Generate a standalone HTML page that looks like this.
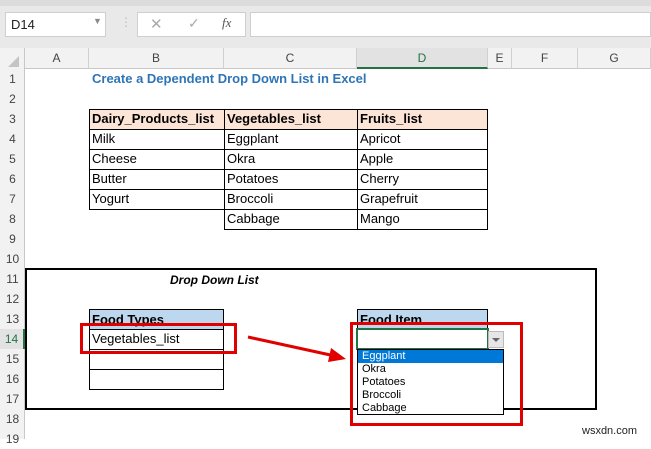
<!DOCTYPE html>
<html><head><style>
*{margin:0;padding:0;box-sizing:border-box}
body{width:651px;height:439px;overflow:hidden;background:#fff;position:relative;font-family:"Liberation Sans",sans-serif;}
.a{position:absolute}
.t{position:absolute;font-size:13px;color:#000;white-space:nowrap}
.hl{position:absolute;background:#d4d4d4}
.rn{position:absolute;left:0;width:25px;text-align:center;font-size:12px;color:#444;height:20px;line-height:20px}
.ch{position:absolute;top:48px;height:21px;line-height:21px;text-align:center;font-size:12px;color:#444;border-right:1px solid #d0d0d0}
.cell{position:absolute;border:1px solid #000;font-size:13px;padding-left:3px;line-height:18px;height:21px}
</style></head><body>
<div class="a" style="left:0;top:0;width:651px;height:48px;background:#e9e9e9"></div>
<div class="a" style="left:0;top:0;width:651px;height:6px;background:#dcdcdc"></div>
<div class="a" style="left:5px;top:12px;width:101px;height:25px;background:#fff;border:1px solid #cfcfcf"></div>
<div class="t" style="left:11px;top:17px;font-size:13px;color:#222">D14</div>
<div class="t" style="left:93px;top:16px;font-size:9px;color:#888">▼</div>
<div class="t" style="left:120px;top:15px;font-size:12px;color:#bbb">⋮</div>
<div class="a" style="left:137px;top:12px;width:109px;height:25px;background:#fff;border:1px solid #cfcfcf"></div>
<div class="t" style="left:150px;top:15px;font-size:15px;color:#aaa">✕</div>
<div class="t" style="left:188px;top:15px;font-size:14px;color:#aaa">✓</div>
<div class="t" style="left:222px;top:15px;font-size:13px;color:#555;font-family:'Liberation Serif',serif;font-style:italic">fx</div>
<div class="a" style="left:250px;top:12px;width:401px;height:25px;background:#fff;border:1px solid #cfcfcf"></div>
<!-- header row -->
<div class="a" style="left:0;top:48px;width:651px;height:21px;background:#f2f2f2;border-bottom:1px solid #c8c8c8"></div>
<div class="a" style="left:0;top:48px;width:25px;height:391px;background:#f2f2f2;border-right:1px solid #c8c8c8"></div>
<div class="a" style="left:8px;top:56px;width:0;height:0;border-left:11px solid transparent;border-bottom:11px solid #c4c4c4"></div>
<div class="ch" style="left:25px;width:64px">A</div>
<div class="ch" style="left:89px;width:135px">B</div>
<div class="ch" style="left:224px;width:133px">C</div>
<div class="ch" style="left:357px;width:131px;background:#e2e2e2;color:#217346;border-bottom:2px solid #217346">D</div>
<div class="ch" style="left:488px;width:24px">E</div>
<div class="ch" style="left:512px;width:66px">F</div>
<div class="ch" style="left:578px;width:73px">G</div>
<div class="rn" style="top:69px">1</div><div class="rn" style="top:89px">2</div><div class="rn" style="top:109px">3</div><div class="rn" style="top:129px">4</div><div class="rn" style="top:149px">5</div><div class="rn" style="top:169px">6</div><div class="rn" style="top:189px">7</div><div class="rn" style="top:209px">8</div><div class="rn" style="top:229px">9</div><div class="rn" style="top:249px">10</div><div class="rn" style="top:269px">11</div><div class="rn" style="top:289px">12</div><div class="rn" style="top:309px">13</div><div class="rn" style="top:329px;background:#e2e2e2;color:#217346;border-right:2px solid #217346">14</div><div class="rn" style="top:349px">15</div><div class="rn" style="top:369px">16</div><div class="rn" style="top:389px">17</div><div class="rn" style="top:409px">18</div><div class="rn" style="top:429px">19</div>
<div class="t" style="left:92px;top:71px;font-weight:bold;color:#2e75b6;font-size:13px">Create a Dependent Drop Down List in Excel</div>
<!-- table -->
<div class="a" style="left:89px;top:109px;width:398px;height:20px;background:#fce4d6"></div>
<div class="a" style="left:89px;top:109px;width:399px;height:101px;border:1px solid #000;border-right:none"></div>
<div class="a" style="left:224px;top:109px;width:264px;height:121px;border:1px solid #000"></div>
<div class="a" style="left:357px;top:109px;width:1px;height:121px;background:#000"></div>
<div class="a" style="left:89px;top:129px;width:399px;height:1px;background:#000"></div>
<div class="a" style="left:89px;top:149px;width:399px;height:1px;background:#000"></div>
<div class="a" style="left:89px;top:169px;width:399px;height:1px;background:#000"></div>
<div class="a" style="left:89px;top:189px;width:399px;height:1px;background:#000"></div>
<div class="a" style="left:224px;top:209px;width:264px;height:1px;background:#000"></div>
<div class="t" style="left:92px;top:111px;font-weight:bold">Dairy_Products_list</div>
<div class="t" style="left:227px;top:111px;font-weight:bold">Vegetables_list</div>
<div class="t" style="left:360px;top:111px;font-weight:bold">Fruits_list</div>
<div class="t" style="left:92px;top:131px">Milk</div><div class="t" style="left:227px;top:131px">Eggplant</div><div class="t" style="left:360px;top:131px">Apricot</div>
<div class="t" style="left:92px;top:151px">Cheese</div><div class="t" style="left:227px;top:151px">Okra</div><div class="t" style="left:360px;top:151px">Apple</div>
<div class="t" style="left:92px;top:171px">Butter</div><div class="t" style="left:227px;top:171px">Potatoes</div><div class="t" style="left:360px;top:171px">Cherry</div>
<div class="t" style="left:92px;top:191px">Yogurt</div><div class="t" style="left:227px;top:191px">Broccoli</div><div class="t" style="left:360px;top:191px">Grapefruit</div>
<div class="t" style="left:227px;top:211px">Cabbage</div><div class="t" style="left:360px;top:211px">Mango</div>
<!-- big box -->
<div class="a" style="left:25px;top:268px;width:572px;height:142px;border:2px solid #000"></div>
<div class="t" style="left:170px;top:273px;font-weight:bold;font-style:italic;font-size:12px">Drop Down List</div>
<div class="a" style="left:89px;top:309px;width:135px;height:81px;border:1px solid #000"></div>
<div class="a" style="left:90px;top:310px;width:133px;height:19px;background:#bdd7ee"></div>
<div class="a" style="left:89px;top:329px;width:135px;height:1px;background:#000"></div>
<div class="a" style="left:89px;top:349px;width:135px;height:1px;background:#000"></div>
<div class="a" style="left:89px;top:369px;width:135px;height:1px;background:#000"></div>
<div class="t" style="left:92px;top:312px;font-weight:bold">Food Types</div>
<div class="t" style="left:92px;top:331px">Vegetables_list</div>
<div class="a" style="left:357px;top:309px;width:131px;height:21px;background:#bdd7ee;border:1px solid #000;border-bottom:none"></div>
<div class="t" style="left:360px;top:312px;font-weight:bold">Food Item</div>
<div class="a" style="left:356px;top:328px;width:133px;height:22px;border:2px solid #217346;background:#fff"></div>
<div class="a" style="left:488px;top:331px;width:16px;height:17px;background:#e6e6e6;border:1px solid #bbb"></div>
<div class="a" style="left:492px;top:338px;width:0;height:0;border-left:4px solid transparent;border-right:4px solid transparent;border-top:4px solid #666"></div>
<!-- dropdown -->
<div class="a" style="left:357px;top:349px;width:147px;height:66px;border:1px solid #000;background:#fff"></div>
<div class="a" style="left:358px;top:350px;width:145px;height:13px;background:#0078d7"></div>
<div class="t" style="left:362px;top:350px;font-size:11px;color:#fff">Eggplant</div>
<div class="t" style="left:362px;top:363px;font-size:11px">Okra</div>
<div class="t" style="left:362px;top:376px;font-size:11px">Potatoes</div>
<div class="t" style="left:362px;top:389px;font-size:11px">Broccoli</div>
<div class="t" style="left:362px;top:402px;font-size:11px">Cabbage</div>
<!-- red -->
<div class="a" style="left:80px;top:323px;width:157px;height:31px;border:3px solid #e00000"></div>
<div class="a" style="left:350px;top:322px;width:173px;height:104px;border:3px solid #e00000"></div>
<svg class="a" style="left:0;top:0" width="651" height="439"><line x1="248" y1="337" x2="335" y2="356" stroke="#e00000" stroke-width="3"/><polygon points="346,359 331,348 328,362" fill="#e00000"/></svg>
<div class="t" style="left:582px;top:425px;font-size:11px;color:#222">wsxdn.com</div>
</body></html>
